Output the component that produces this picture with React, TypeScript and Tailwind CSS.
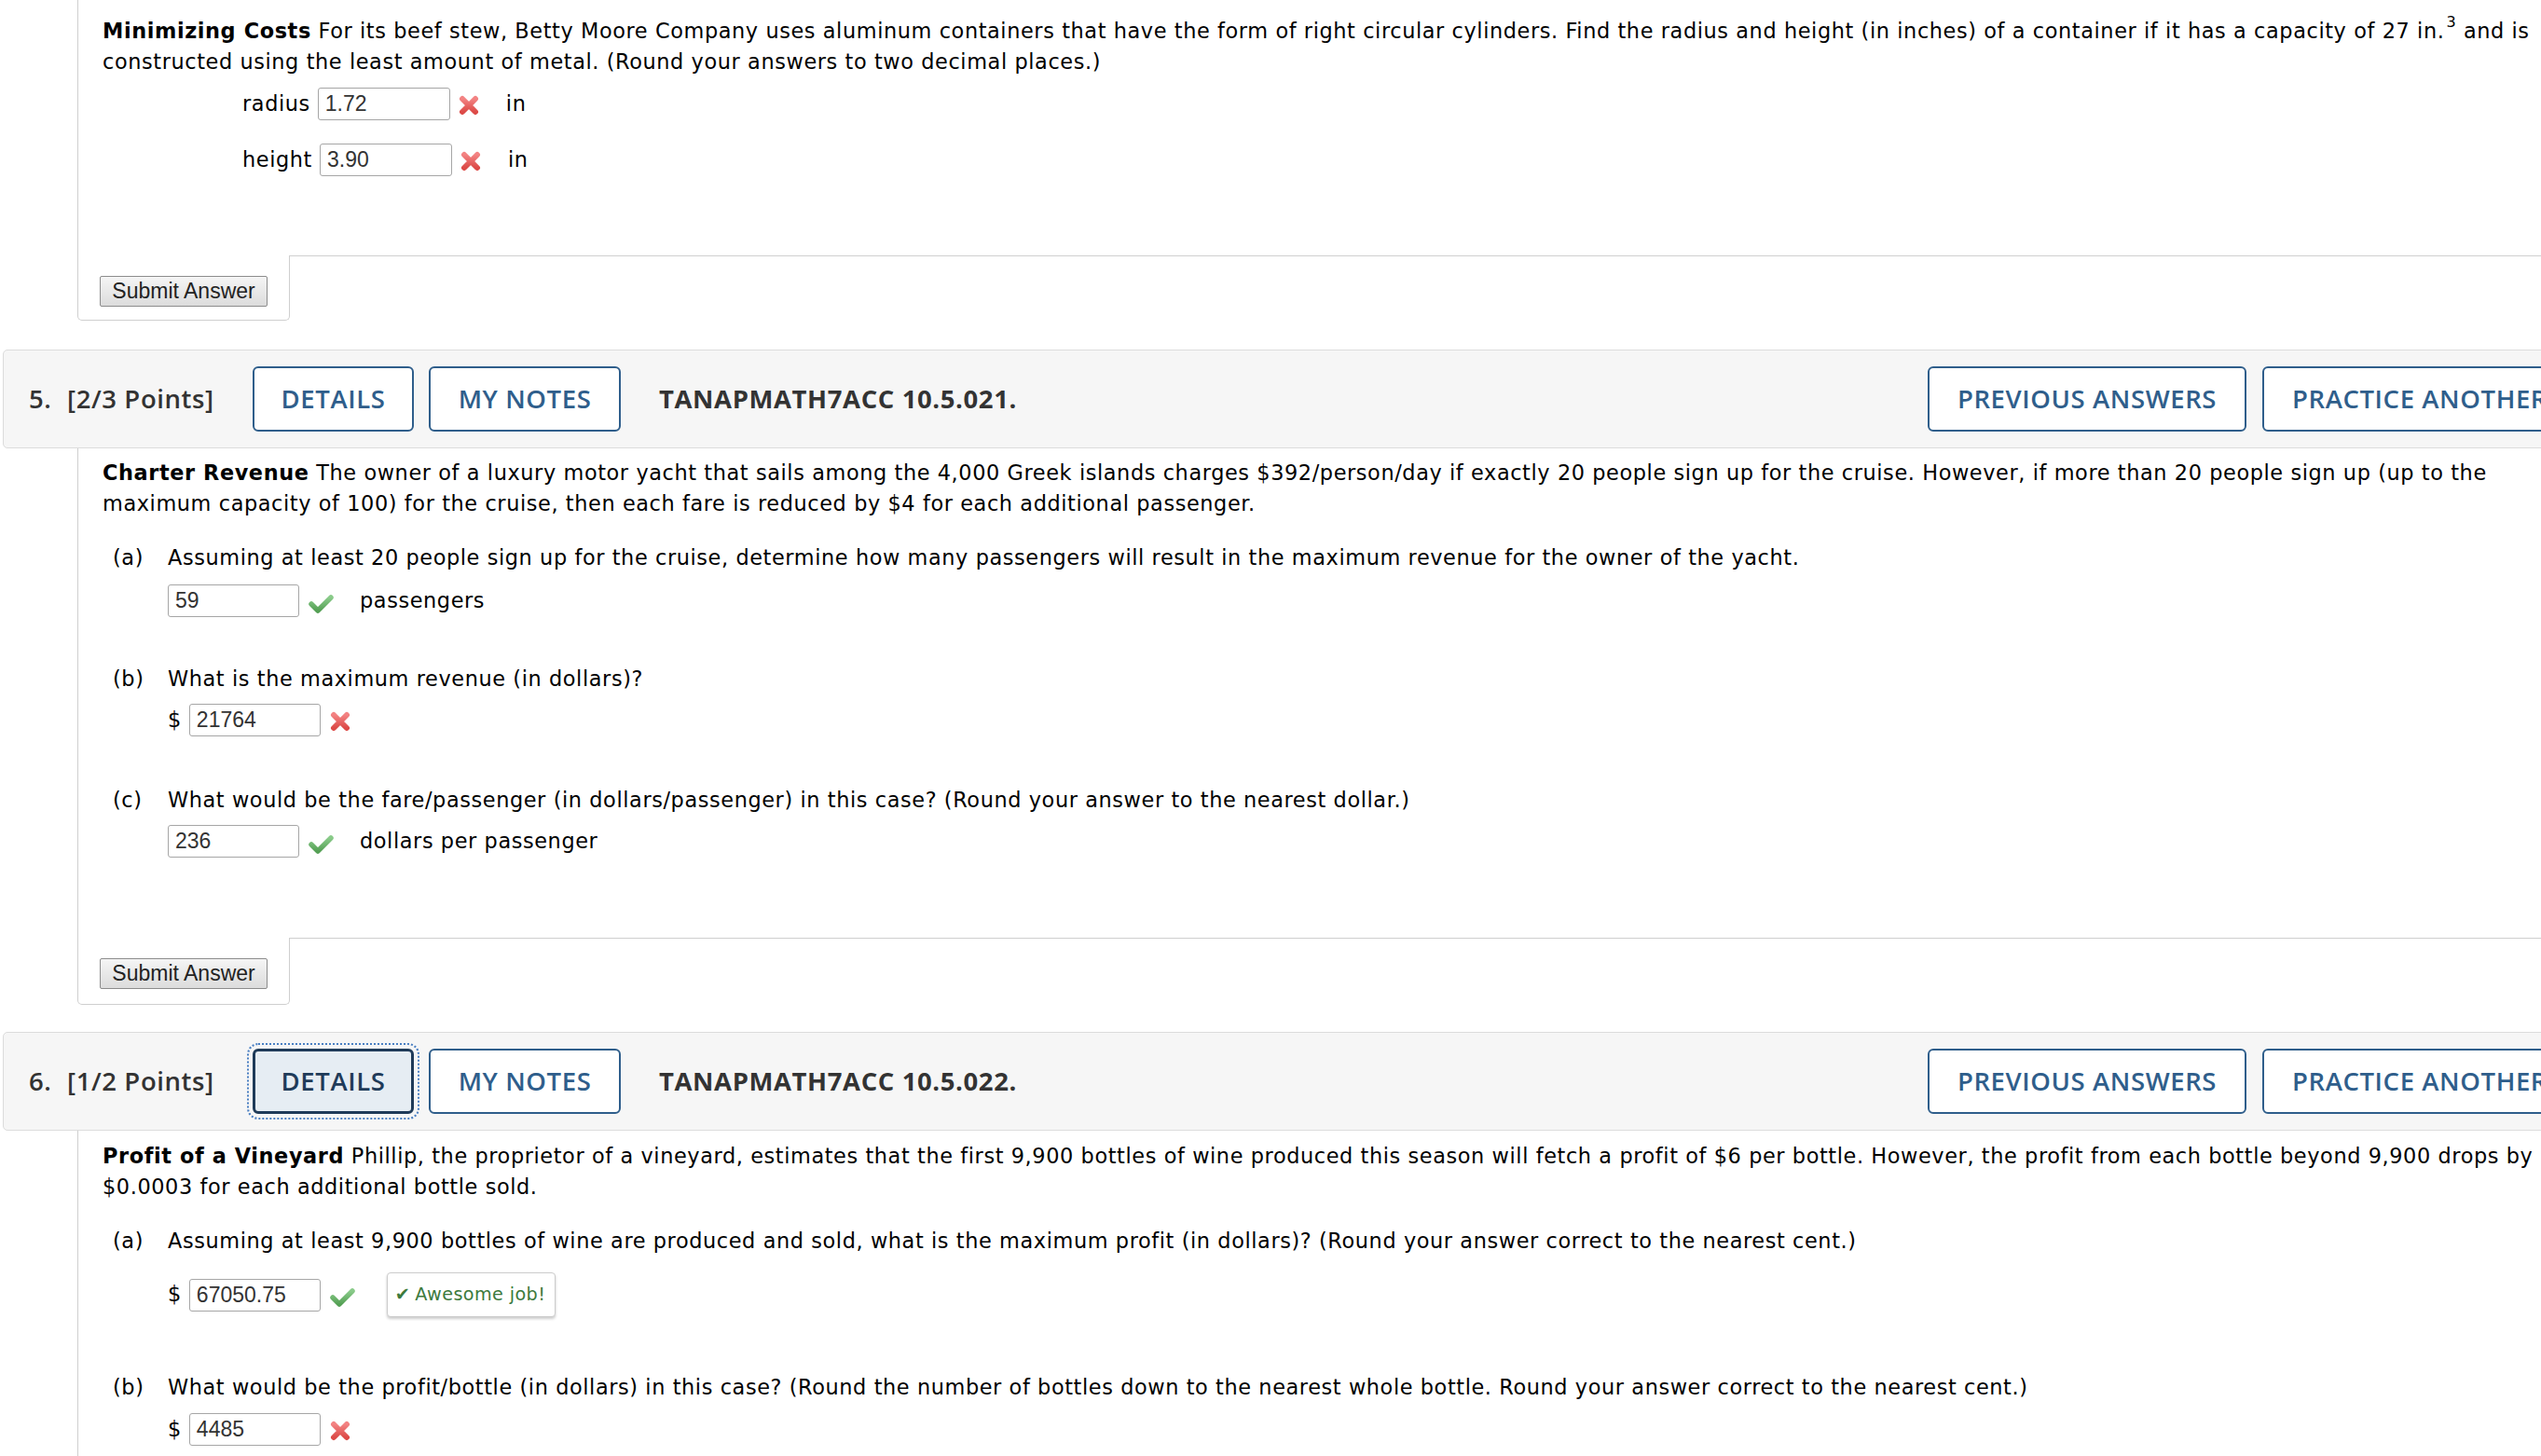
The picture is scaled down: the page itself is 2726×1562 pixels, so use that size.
import React from "react";

const VERD = "font-['DejaVu_Sans',Verdana,sans-serif]";
const ARIAL = "font-['Liberation_Sans',Arial,sans-serif]";
const OPEN = "font-['Open_Sans',sans-serif]";

function XIcon({ className = "" }: { className?: string }) {
  return (
    <svg width="24" height="22" viewBox="0 0 24 22" className={className}>
      <defs>
        <linearGradient id="xgrad" x1="0" y1="0" x2="0" y2="1">
          <stop offset="0" stopColor="#f38383" />
          <stop offset="1" stopColor="#dc4a47" />
        </linearGradient>
      </defs>
      <path d="M5 4 L19 18 M19 4 L5 18" stroke="url(#xgrad)" strokeWidth="6" strokeLinecap="round" fill="none" />
    </svg>
  );
}

function CheckIcon({ className = "" }: { className?: string }) {
  return (
    <svg width="28" height="22" viewBox="0 0 28 22" className={className}>
      <defs>
        <linearGradient id="cgrad" x1="0" y1="0" x2="0" y2="1">
          <stop offset="0" stopColor="#8acb8a" />
          <stop offset="1" stopColor="#55a055" />
        </linearGradient>
      </defs>
      <path d="M4 11 L11 18 L25 4" stroke="url(#cgrad)" strokeWidth="5.5" strokeLinecap="round" strokeLinejoin="round" fill="none" />
    </svg>
  );
}

function Field({ value, className = "" }: { value: string; className?: string }) {
  return (
    <div
      className={`w-[141px] h-[35px] border border-[#a6a6a6] rounded-[3px] bg-white pl-[7px] flex items-center text-[23px] tracking-normal text-[#333] ${ARIAL} ${className}`}
    >
      {value}
    </div>
  );
}

function SubmitTab({ h }: { h: string }) {
  return (
    <div className="flex ml-[83px]">
      <div className={`w-[228px] ${h} border-l border-r border-b border-[#cfcfcf] rounded-b-[5px] pl-[23px] pt-[22px] flex-none`}>
        <div
          className={`w-[180px] h-[33px] border border-[#8c8c8c] rounded-[2px] bg-linear-to-b from-[#f5f5f5] to-[#dcdcdc] flex items-center justify-center text-[23px] tracking-normal text-[#222] ${ARIAL}`}
        >
          Submit Answer
        </div>
      </div>
      <div className="flex-1 border-t border-[#cfcfcf]" />
    </div>
  );
}

function HeaderButton({
  label,
  w,
  focused = false,
  left = false,
  className = "",
}: {
  label: string;
  w: string;
  focused?: boolean;
  left?: boolean;
  className?: string;
}) {
  const base = focused
    ? "border-[3px] border-[#1f3b59] bg-[#e6edf3] text-[#1f3b59] outline-2 outline-dotted outline-offset-[4px] outline-[#4a7fc2]"
    : "border-2 border-[#2f5e8b] bg-white text-[#2f5e8b]";
  return (
    <div
      className={`${w} h-[70px] rounded-[6px] flex items-center ${left ? "justify-start pl-[30px]" : "justify-center"} text-[27.5px] tracking-[0.6px] font-semibold whitespace-nowrap flex-none ${base} ${className}`}
    >
      {label}
    </div>
  );
}

function Header({ num, points, code, focused = false }: { num: string; points: string; code: string; focused?: boolean }) {
  return (
    <div className={`ml-[3px] w-[2900px] h-[106px] border border-[#dcdcdc] rounded-[5px] bg-[#f6f6f6] flex items-center tracking-[0.6px] ${OPEN}`}>
      <div className="flex-none w-[2064px] flex items-center pl-[27px]">
        <span className="w-[41px] text-[27.5px] font-semibold text-[#333] flex-none">{num}</span>
        <span className="w-[199px] text-[27.5px] font-semibold text-[#333] flex-none whitespace-nowrap">{points}</span>
        <HeaderButton label="DETAILS" w="w-[173px]" focused={focused} />
        <HeaderButton label="MY NOTES" w="w-[206px]" className="ml-[16px]" />
        <span className="ml-[41px] text-[27.5px] font-bold text-[#333] whitespace-nowrap">{code}</span>
      </div>
      <HeaderButton label="PREVIOUS ANSWERS" w="w-[342px]" />
      <HeaderButton label="PRACTICE ANOTHER" w="w-[380px]" left className="ml-[17px]" />
    </div>
  );
}

function Part({ label, text, className = "" }: { label: string; text: string; className?: string }) {
  return (
    <div className={`flex pl-[11px] leading-[33px] whitespace-nowrap ${className}`}>
      <span className="w-[59px] flex-none">{label}</span>
      <span>{text}</span>
    </div>
  );
}

export default function App() {
  return (
    <div className={`w-[2726px] h-[1562px] overflow-hidden bg-white text-black ${VERD} text-[22.4px] tracking-[0.6px]`}>
      {/* Question 4 body */}
      <div className="ml-[83px] border-l border-[#cfcfcf] pl-[26px] pt-[16px] pb-[85px]">
        <div className="leading-[33px] whitespace-nowrap">
          <b>Minimizing Costs</b> For its beef stew, Betty Moore Company uses aluminum containers that have the form of right
          circular cylinders. Find the radius and height (in inches) of a container if it has a capacity of 27 in.
          <span className="align-[12px] text-[16px] leading-none ml-[2px]">3</span> and is
        </div>
        <div className="leading-[33px] whitespace-nowrap">
          constructed using the least amount of metal. (Round your answers to two decimal places.)
        </div>
        <div className="mt-[11px] pl-[150px] flex items-center h-[35px]">
          <span>radius</span>
          <Field value="1.72" className="ml-[8px] w-[142px]" />
          <XIcon className="ml-[8px] mt-[2px]" />
          <span className="ml-[28px]">in</span>
        </div>
        <div className="mt-[25px] pl-[150px] flex items-center h-[35px]">
          <span>height</span>
          <Field value="3.90" className="ml-[8px] w-[142px]" />
          <XIcon className="ml-[8px] mt-[2px]" />
          <span className="ml-[28px]">in</span>
        </div>
      </div>
      <SubmitTab h="h-[70px]" />

      <div className="mt-[31px]">
        <Header num="5." points="[2/3 Points]" code="TANAPMATH7ACC 10.5.021." />
      </div>

      {/* Question 5 body */}
      <div className="ml-[83px] border-l border-[#cfcfcf] pl-[26px] pt-[10px] pb-[86px]">
        <div className="leading-[33px] whitespace-nowrap">
          <b>Charter Revenue</b> The owner of a luxury motor yacht that sails among the 4,000 Greek islands charges
          $392/person/day if exactly 20 people sign up for the cruise. However, if more than 20 people sign up (up to the
        </div>
        <div className="leading-[33px] whitespace-nowrap">
          maximum capacity of 100) for the cruise, then each fare is reduced by $4 for each additional passenger.
        </div>
        <Part
          className="mt-[25px]"
          label="(a)"
          text="Assuming at least 20 people sign up for the cruise, determine how many passengers will result in the maximum revenue for the owner of the yacht."
        />
        <div className="mt-[12px] pl-[70px] flex items-center h-[35px]">
          <Field value="59" />
          <CheckIcon className="ml-[9px] mt-[6px]" />
          <span className="ml-[28px]">passengers</span>
        </div>
        <Part className="mt-[50px]" label="(b)" text="What is the maximum revenue (in dollars)?" />
        <div className="mt-[10px] pl-[70px] flex items-center h-[35px]">
          <span>$</span>
          <Field value="21764" className="ml-[8px]" />
          <XIcon className="ml-[9px] mt-[3px]" />
        </div>
        <Part
          className="mt-[52px]"
          label="(c)"
          text="What would be the fare/passenger (in dollars/passenger) in this case? (Round your answer to the nearest dollar.)"
        />
        <div className="mt-[10px] pl-[70px] flex items-center h-[35px]">
          <Field value="236" />
          <CheckIcon className="ml-[9px] mt-[6px]" />
          <span className="ml-[28px]">dollars per passenger</span>
        </div>
      </div>
      <SubmitTab h="h-[72px]" />

      <div className="mt-[29px]">
        <Header num="6." points="[1/2 Points]" code="TANAPMATH7ACC 10.5.022." focused />
      </div>

      {/* Question 6 body */}
      <div className="ml-[83px] border-l border-[#cfcfcf] pl-[26px] pt-[11px] h-[400px]">
        <div className="leading-[33px] whitespace-nowrap">
          <b>Profit of a Vineyard</b> Phillip, the proprietor of a vineyard, estimates that the first 9,900 bottles of wine
          produced this season will fetch a profit of $6 per bottle. However, the profit from each bottle beyond 9,900 drops by
        </div>
        <div className="leading-[33px] whitespace-nowrap">$0.0003 for each additional bottle sold.</div>
        <Part
          className="mt-[25px]"
          label="(a)"
          text="Assuming at least 9,900 bottles of wine are produced and sold, what is the maximum profit (in dollars)? (Round your answer correct to the nearest cent.)"
        />
        <div className="mt-[17px] pl-[70px] flex items-center h-[48px]">
          <span>$</span>
          <Field value="67050.75" className="ml-[8px]" />
          <CheckIcon className="ml-[9px] mt-[6px]" />
          <div className="ml-[34px] h-[48px] w-[181px] border border-[#cccccc] rounded-[4px] bg-white shadow-[0_2px_3px_rgba(0,0,0,0.2)] flex items-center pl-[8px] text-[19.2px] tracking-[0.4px] text-[#3d7a3d] whitespace-nowrap">
            <span className="mr-[5px]">✔</span>Awesome job!
          </div>
        </div>
        <Part
          className="mt-[59px]"
          label="(b)"
          text="What would be the profit/bottle (in dollars) in this case? (Round the number of bottles down to the nearest whole bottle. Round your answer correct to the nearest cent.)"
        />
        <div className="mt-[11px] pl-[70px] flex items-center h-[35px]">
          <span>$</span>
          <Field value="4485" className="ml-[8px]" />
          <XIcon className="ml-[9px] mt-[3px]" />
        </div>
      </div>
    </div>
  );
}
